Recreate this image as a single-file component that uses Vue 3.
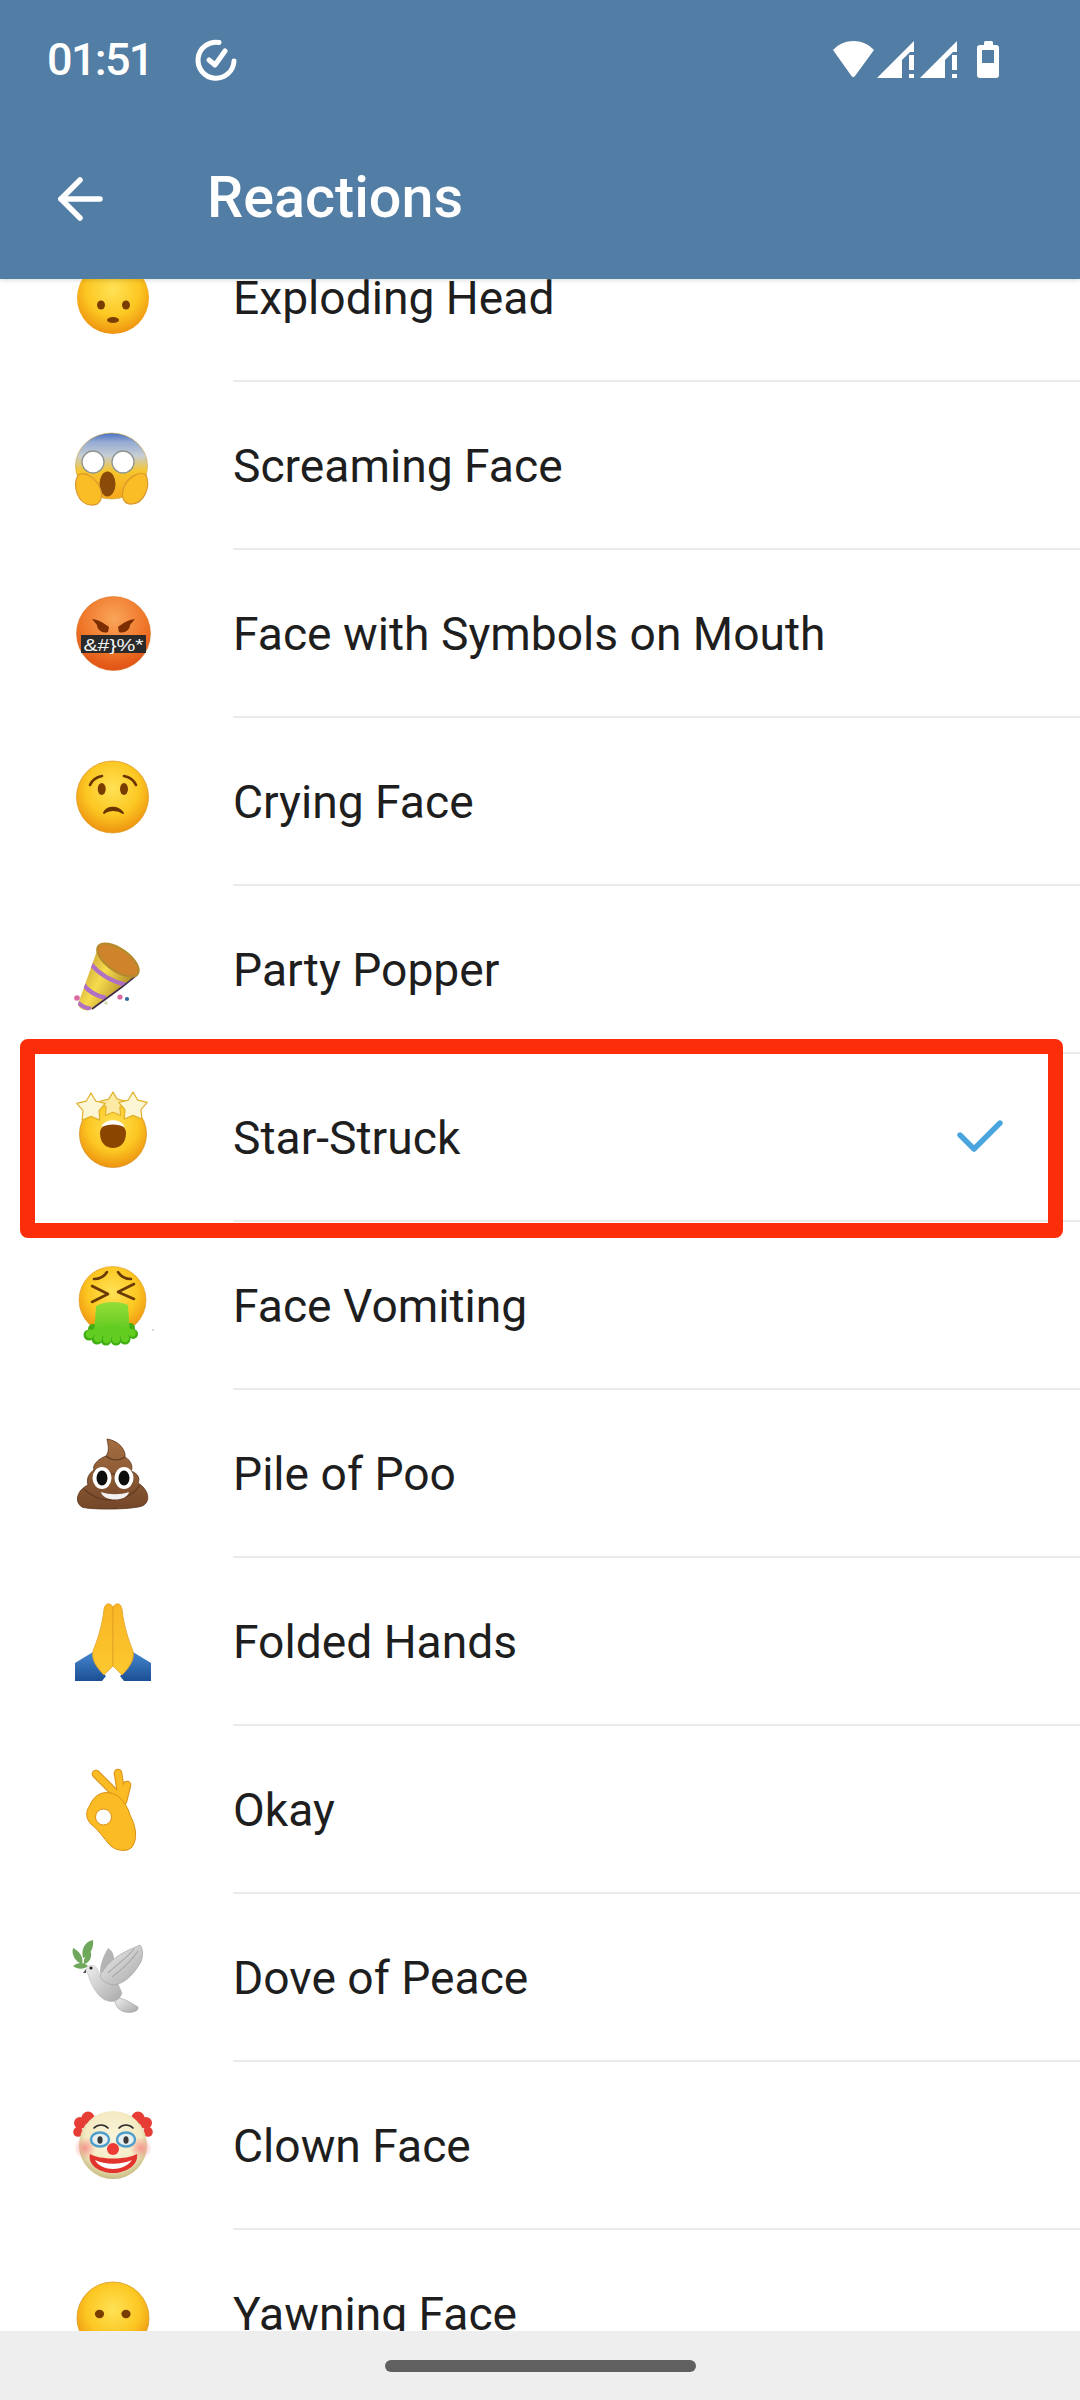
<script setup>
const rows = [
  { id: 'exploding', name: 'Exploding Head' },
  { id: 'scream', name: 'Screaming Face' },
  { id: 'symbols', name: 'Face with Symbols on Mouth' },
  { id: 'crying', name: 'Crying Face' },
  { id: 'party', name: 'Party Popper' },
  { id: 'star', name: 'Star-Struck', selected: true },
  { id: 'vomit', name: 'Face Vomiting' },
  { id: 'poo', name: 'Pile of Poo' },
  { id: 'folded', name: 'Folded Hands' },
  { id: 'okay', name: 'Okay' },
  { id: 'dove', name: 'Dove of Peace' },
  { id: 'clown', name: 'Clown Face' },
  { id: 'yawn', name: 'Yawning Face' },
]

function star(cx, cy, r) {
  const pts = []
  for (let i = 0; i < 10; i++) {
    const rad = i % 2 ? r * 0.56 : r
    const a = -Math.PI / 2 + (i * Math.PI) / 5
    pts.push(`${(cx + rad * Math.cos(a)).toFixed(1)},${(cy + rad * Math.sin(a)).toFixed(1)}`)
  }
  return pts.join(' ')
}
</script>

<template>
  <div class="page">
    <svg class="defs" width="0" height="0">
      <defs>
        <radialGradient id="gFace" cx="50%" cy="38%" r="62%">
          <stop offset="0" stop-color="#ffe256" />
          <stop offset="0.6" stop-color="#fcc722" />
          <stop offset="1" stop-color="#ee9310" />
        </radialGradient>
        <linearGradient id="gScream" x1="0" y1="0" x2="0" y2="1">
          <stop offset="0" stop-color="#4a70c4" />
          <stop offset="0.14" stop-color="#97acd2" />
          <stop offset="0.34" stop-color="#c5cdd6" />
          <stop offset="0.58" stop-color="#f7c52c" />
          <stop offset="1" stop-color="#f6a71b" />
        </linearGradient>
        <radialGradient id="gAngry" cx="50%" cy="30%" r="75%">
          <stop offset="0" stop-color="#f9a55a" />
          <stop offset="0.6" stop-color="#ef7528" />
          <stop offset="1" stop-color="#dd4a10" />
        </radialGradient>
        <linearGradient id="gCone" x1="0" y1="0" x2="1" y2="0.6">
          <stop offset="0" stop-color="#b4862a" />
          <stop offset="0.5" stop-color="#f6dc4e" />
          <stop offset="1" stop-color="#a57a20" />
        </linearGradient>
        <linearGradient id="gGreen" x1="0" y1="0" x2="0" y2="1">
          <stop offset="0" stop-color="#93dd38" />
          <stop offset="1" stop-color="#5cc81e" />
        </linearGradient>
        <linearGradient id="gPoo" x1="0" y1="0" x2="0" y2="1">
          <stop offset="0" stop-color="#a56e42" />
          <stop offset="1" stop-color="#744729" />
        </linearGradient>
        <linearGradient id="gHand" x1="0" y1="0" x2="0" y2="1">
          <stop offset="0" stop-color="#f9b625" />
          <stop offset="1" stop-color="#fcc82f" />
        </linearGradient>
        <linearGradient id="gCuff" x1="0" y1="0" x2="0" y2="1">
          <stop offset="0" stop-color="#4587cf" />
          <stop offset="1" stop-color="#1c4f94" />
        </linearGradient>
        <linearGradient id="gDove" x1="0" y1="0" x2="1" y2="1">
          <stop offset="0" stop-color="#efefef" />
          <stop offset="1" stop-color="#a8a8a8" />
        </linearGradient>
        <radialGradient id="gClown" cx="50%" cy="42%" r="58%">
          <stop offset="0" stop-color="#fbf5dc" />
          <stop offset="0.72" stop-color="#f4eac2" />
          <stop offset="1" stop-color="#c6bb80" />
        </radialGradient>
        <radialGradient id="gCheek">
          <stop offset="0" stop-color="#f68a86" stop-opacity="0.85" />
          <stop offset="1" stop-color="#f68a86" stop-opacity="0" />
        </radialGradient>
        <clipPath id="coneClip">
          <path d="M38 29 L77 56 L32 90 C27 93 19 91 18 85 Z" />
        </clipPath>
      </defs>
    </svg>

    <header class="appbar">
      <div class="status">
        <span class="time">01:51</span>
        <svg class="status-check" width="44" height="44" viewBox="0 0 44 44" fill="none" stroke="#fff" stroke-width="5" stroke-linecap="round" stroke-linejoin="round">
          <path d="M25 4.5 A18 18 0 1 0 40 23" />
          <path d="M15 22 L21 27 L31 13" />
        </svg>
        <svg class="status-right" width="170" height="38" viewBox="0 0 170 38" fill="#fff">
          <path d="M1 9 C12 -3 31 -3 42 9 L23 35 C22 36.5 20.5 36.5 19.5 35 Z" />
          <g v-for="dx in [0, 43]" :key="dx" :transform="`translate(${dx} 0)`">
            <path d="M45 37 L82 0 V37 Z" />
            <path d="M70 19 L78 11 H83 V38 H70 Z" fill="#527da4" />
            <rect x="77" y="14" width="5" height="15" />
            <rect x="77" y="33" width="5" height="4" />
          </g>
          <rect x="152" y="0" width="9" height="6" rx="1.5" />
          <path fill-rule="evenodd" d="M148 4 H164 Q167 4 167 7 V34 Q167 37 164 37 H148 Q145 37 145 34 V7 Q145 4 148 4 Z M150 9 V22 H162 V9 Z" />
        </svg>
      </div>
      <div class="toolbar">
        <svg class="back" width="46" height="46" viewBox="0 0 46 46" fill="none" stroke="#fff" stroke-width="5.5" stroke-linecap="round" stroke-linejoin="round">
          <path d="M43 23 H4" />
          <path d="M23 4 L4 23 L23 42" />
        </svg>
        <span class="title">Reactions</span>
      </div>
    </header>

    <main class="viewport">
      <ul class="list">
        <li v-for="row in rows" :key="row.id" class="row">
          <svg class="emoji" width="100" height="100" viewBox="0 0 100 100">
            <template v-if="row.id === 'exploding'">
              <circle cx="53" cy="51" r="36" fill="url(#gFace)" />
              <ellipse cx="41" cy="58" rx="4" ry="4.5" fill="#7a3d00" />
              <ellipse cx="66" cy="58" rx="4" ry="4.5" fill="#7a3d00" />
              <ellipse cx="53" cy="73" rx="6" ry="3" fill="#7a3d00" />
            </template>

            <template v-else-if="row.id === 'scream'">
              <ellipse cx="51.5" cy="51" rx="36" ry="33" fill="url(#gScream)" stroke="#c9a23a" stroke-width="0.6" />
              <circle cx="33" cy="47" r="11" fill="#fff" stroke="#8d958f" stroke-width="1.3" />
              <circle cx="63" cy="47" r="11" fill="#fff" stroke="#8d958f" stroke-width="1.3" />
              <ellipse cx="47.5" cy="69" rx="8" ry="12.5" fill="#8a4a08" />
              <path d="M18 60 C12 72 18 89 31 90 C42 91 43 80 40 73 C37 65 26 55 18 60 Z" fill="#fbbd26" stroke="#d8962f" stroke-width="1.2" />
              <path d="M86 60 C91 72 84 88 72 89 C62 90 61 79 64 72 C67 64 78 55 86 60 Z" fill="#fbbd26" stroke="#d8962f" stroke-width="1.2" />
            </template>

            <template v-else-if="row.id === 'symbols'">
              <circle cx="53.5" cy="50.5" r="37" fill="url(#gAngry)" stroke="#d8792c" stroke-width="0.6" />
              <path d="M32 36 C40 37 45 41 49 44 L48 49 C43 51 37 47 37 42 Z" fill="#7d2e00" />
              <path d="M75 36 C67 37 62 41 58 44 L59 49 C64 51 70 47 70 42 Z" fill="#7d2e00" />
              <rect x="21" y="52" width="65" height="18" fill="#2a2a2a" />
              <text x="53.5" y="67.5" class="swear" text-anchor="middle" textLength="60" lengthAdjust="spacingAndGlyphs">&amp;#}%*</text>
            </template>

            <template v-else-if="row.id === 'crying'">
              <circle cx="52.5" cy="46" r="36" fill="url(#gFace)" stroke="#dd9a2a" stroke-width="0.8" />
              <ellipse cx="41.7" cy="38" rx="4" ry="6" fill="#7a3d00" />
              <ellipse cx="64" cy="38" rx="4" ry="6" fill="#7a3d00" />
              <path d="M30 34 C32 29 37 26 42 25 M64 25 C69 26 74 29 76 34" fill="none" stroke="#6a3500" stroke-width="2.6" stroke-linecap="round" />
              <path d="M44 62 C47 55 58 55 63 62 C58 58 49 58 44 62 Z" fill="#6a3500" stroke="#6a3500" stroke-width="2" stroke-linejoin="round" />
            </template>

            <template v-else-if="row.id === 'party'">
              <path d="M38 29 L77 56 L32 90 C27 93 19 91 18 85 Z" fill="url(#gCone)" />
              <g clip-path="url(#coneClip)" fill="none" stroke="#b070c4" stroke-width="4.4">
                <path d="M30 44 C38 54 50 62 66 66" />
                <path d="M23 65 C28 72 36 77 46 79" />
                <path d="M16 82 C20 86 25 89 31 90" />
              </g>
              <path d="M32 90 L62 68 L77 56" fill="none" stroke="#3d2b4d" stroke-width="1.6" />
              <ellipse cx="58" cy="41" rx="24" ry="11" transform="rotate(35 58 41)" fill="#cf842c" stroke="#b58a2c" stroke-width="2.2" />
              <circle cx="17" cy="79" r="2.8" fill="#d86aa0" />
              <circle cx="60" cy="78" r="2.6" fill="#d86aa0" />
              <circle cx="67" cy="80" r="2.1" fill="#2f6a9c" />
              <circle cx="46" cy="84" r="1.8" fill="#d8dcb0" />
            </template>

            <template v-else-if="row.id === 'star'">
              <circle cx="53" cy="47" r="33.5" fill="url(#gFace)" stroke="#d99428" stroke-width="0.8" />
              <path d="M40 46 C40 33 66 33 66 46 C66 56 60 61 53 61 C46 61 40 56 40 46 Z" fill="#8a4600" />
              <path d="M41.5 40 C44 31 62 31 64.5 40 C58 36.5 48 36.5 41.5 40 Z" fill="#fff" />
              <g fill="#fdf6d4" stroke="#e0b02c" stroke-width="1.2" stroke-linejoin="round">
                <polygon :points="star(53, 18, 13)" fill="#fbe9a4" />
                <polygon :points="star(31, 21, 15)" />
                <polygon :points="star(73, 20, 15)" />
              </g>
            </template>

            <template v-else-if="row.id === 'vomit'">
              <circle cx="52.5" cy="45" r="33.5" fill="url(#gFace)" stroke="#dd9a2a" stroke-width="0.6" />
              <g fill="none" stroke="#6a3a05" stroke-width="2.6" stroke-linecap="round" stroke-linejoin="round">
                <path d="M32 31 L48 39 L32 47" />
                <path d="M74 29 L58 37 L74 44" />
                <path d="M34 24 C40 24 44 22 47 17" />
                <path d="M58 17 C61 22 65 24 71 24" />
              </g>
              <g fill="#3fae12">
                <circle cx="29" cy="80" r="5.5" />
                <circle cx="37" cy="84" r="5.5" />
                <circle cx="46" cy="85" r="5.5" />
                <circle cx="56" cy="85" r="5.5" />
                <circle cx="65" cy="84" r="5.5" />
                <circle cx="73" cy="79" r="5" />
                <circle cx="33" cy="74" r="5" />
                <circle cx="70" cy="73" r="5" />
              </g>
              <path d="M36 51 C44 46 60 46 68 50 L70 80 L34 80 Z" fill="url(#gGreen)" />
              <g fill="#62cd20">
                <circle cx="30" cy="79" r="4.2" />
                <circle cx="38" cy="83" r="4.2" />
                <circle cx="47" cy="84" r="4.2" />
                <circle cx="56" cy="84" r="4.2" />
                <circle cx="65" cy="83" r="4.2" />
                <circle cx="72" cy="78" r="3.8" />
                <ellipse cx="52" cy="76" rx="20" ry="6" />
              </g>
              <circle cx="93" cy="75" r="1" fill="#c8c8c8" />
            </template>

            <template v-else-if="row.id === 'poo'">
              <path d="M47 16 C60 18 66 28 65 34 C72 38 73 45 71 48 C79 51 80 56 78 60 C88 66 91 77 84 82 C78 87 28 87 22 84 C14 79 17 67 28 62 C26 56 29 50 34 47 C32 42 38 36 46 33 C50 28 48 22 47 16 Z" fill="url(#gPoo)" stroke="#5b3419" stroke-width="0.8" />
              <path d="M46 33 C52 38 60 38 65 34 M34 47 C42 52 60 52 71 48 M24 66 C42 84 70 78 80 62" fill="none" stroke="#633b1f" stroke-width="1.4" />
              <ellipse cx="42" cy="55" rx="9.5" ry="11" fill="#fff" />
              <ellipse cx="64" cy="55" rx="9.5" ry="11" fill="#fff" />
              <ellipse cx="42" cy="55" rx="5.5" ry="7.5" fill="#0d0d0d" />
              <ellipse cx="64" cy="55" rx="5.5" ry="7.5" fill="#0d0d0d" />
              <path d="M41 69 C50 72 60 72 69 69 C67 79 43 79 41 69 Z" fill="#f2f2f2" />
            </template>

            <template v-else-if="row.id === 'folded'">
              <path d="M15 72 L33 61 C34 72 40 80 46 85 L42 90 L15 90 Z" fill="url(#gCuff)" />
              <path d="M91 72 L73 61 C72 72 66 80 60 85 L64 90 L91 90 Z" fill="url(#gCuff)" />
              <path d="M53 16 C50 11 45 12 44 18 C42 36 37 50 33 60 C31 68 36 76 44 84 L53 75 Z" fill="url(#gHand)" stroke="#de9c23" stroke-width="0.7" />
              <path d="M53 16 C56 11 61 12 62 18 C64 36 69 50 73 60 C75 68 70 76 62 84 L53 75 Z" fill="url(#gHand)" stroke="#de9c23" stroke-width="0.7" />
            </template>

            <template v-else-if="row.id === 'okay'">
              <g fill="none" stroke-linecap="round">
                <g stroke="#d98f14" stroke-width="8.6">
                  <path d="M36 15 L62 41" />
                  <path d="M58 14 L62 40" />
                  <path d="M67 26 L63 42" />
                </g>
                <g stroke="#fbbb24" stroke-width="6.6">
                  <path d="M67 26 L63 42" />
                  <path d="M58 14 L62 40" />
                  <path d="M36 15 L62 41" />
                </g>
              </g>
              <path d="M58 37 C46 30 35 34 30 46 C25 53 26 60 31 65 C37 70 41 75 48 84 C54 92 67 94 72 88 C78 80 76 67 70 56 C68 48 64 43 58 37 Z" fill="#fbbb24" stroke="#d98f14" stroke-width="1" />
              <circle cx="43.5" cy="58" r="8" fill="#fff" stroke="#d98f14" stroke-width="1" />
            </template>

            <template v-else-if="row.id === 'dove'">
              <g fill="#6fa85c">
                <path d="M33 13 C24 15 21 23 23 31 C30 29 34 21 33 13 Z" />
                <path d="M13 21 C11 28 16 35 22 37 C24 30 19 24 13 21 Z" />
                <path d="M31 25 C26 27 23 32 24 37 C29 36 32 31 31 25 Z" />
                <path d="M13 39 C18 43 25 42 28 39 C24 35 18 35 13 39 Z" />
              </g>
              <path d="M40 46 C40 36 44 28 48 21 C55 25 56 34 50 42 Z" fill="#b4b4b4" />
              <path d="M55 72 C60 69 70 75 78 80 C79 85 69 87 62 84 C58 82 54 77 55 72 Z" fill="url(#gDove)" stroke="#9c9c9c" stroke-width="0.6" />
              <path d="M26 44 C26 37 36 36 38 44 C42 50 50 52 56 52 L62 66 C60 73 54 76 48 74 C38 72 30 56 28 47 Z" fill="url(#gDove)" stroke="#b4b4b4" stroke-width="0.5" />
              <path d="M40 49 C50 30 66 24 80 18 C84 22 83 34 79 38 C72 50 62 58 52 58 C46 56 42 54 40 49 Z" fill="url(#gDove)" stroke="#9c9c9c" stroke-width="0.6" />
              <path d="M52 50 C60 44 70 36 78 24 M48 46 C56 38 66 32 74 22" fill="none" stroke="#a6a6a6" stroke-width="1.1" />
              <circle cx="31" cy="41" r="1.6" fill="#222" />
              <path d="M26 42 L23 46 L26 46 Z" fill="#555" />
            </template>

            <template v-else-if="row.id === 'clown'">
              <g fill="#e63e36">
                <circle cx="28" cy="23" r="6.5" />
                <circle cx="20" cy="28" r="6" />
                <circle cx="18" cy="37" r="4.8" />
                <circle cx="78" cy="23" r="6.5" />
                <circle cx="86" cy="28" r="6" />
                <circle cx="88" cy="37" r="4.8" />
              </g>
              <circle cx="53" cy="50" r="34" fill="url(#gClown)" />
              <circle cx="25" cy="53" r="11" fill="url(#gCheek)" />
              <circle cx="81" cy="53" r="11" fill="url(#gCheek)" />
              <path d="M34 33 C38 29 44 29 48 33 M59 33 C63 29 69 29 73 33" fill="none" stroke="#2c2c2c" stroke-width="1.7" stroke-linecap="round" />
              <ellipse cx="40" cy="44.5" rx="9" ry="7" fill="#e7efef" stroke="#4f9dc9" stroke-width="2.4" />
              <ellipse cx="66" cy="44.5" rx="9" ry="7" fill="#e7efef" stroke="#4f9dc9" stroke-width="2.4" />
              <ellipse cx="40" cy="45" rx="2.6" ry="3.8" fill="#3a3a3a" />
              <ellipse cx="66" cy="45" rx="2.6" ry="3.8" fill="#3a3a3a" />
              <path d="M30 59 C40 65 66 65 77 59 C79 70 66 78 53 78 C40 78 27 70 30 59 Z" fill="#e2342d" />
              <path d="M35 65 C46 70 60 70 72 65 C68 71 60 74 53 74 C46 74 38 71 35 65 Z" fill="#fff" />
              <circle cx="53" cy="54" r="6" fill="#ee3b36" />
            </template>

            <template v-else-if="row.id === 'yawn'">
              <circle cx="53" cy="55" r="36" fill="url(#gFace)" stroke="#d99a1e" stroke-width="0.8" />
              <ellipse cx="39.5" cy="51" rx="4.6" ry="4.2" fill="#7a3d00" />
              <ellipse cx="66" cy="51" rx="4.6" ry="4.2" fill="#7a3d00" />
            </template>
          </svg>

          <div class="row-body">
            <span class="label">{{ row.name }}</span>
            <svg v-if="row.selected" class="tick" width="46" height="36" viewBox="0 0 46 36" fill="none" stroke="#4aa5df" stroke-width="5.4" stroke-linecap="round" stroke-linejoin="round">
              <path d="M3 17 L17 31 L43 5" />
            </svg>
          </div>

          <div v-if="row.selected" class="highlight"></div>
        </li>
      </ul>
    </main>

    <footer class="navbar">
      <div class="pill"></div>
    </footer>
  </div>
</template>

<style scoped>
.page {
  width: 1080px;
  height: 2400px;
  display: flex;
  flex-direction: column;
  overflow: hidden;
  background: #fff;
  font-family: Roboto, "Liberation Sans", sans-serif;
}
.defs {
  position: absolute;
}
.appbar {
  flex: none;
  height: 279px;
  background: #527da4;
  position: relative;
  z-index: 2;
  box-shadow: 0 1px 5px rgba(0, 0, 0, 0.16);
  color: #fff;
}
.status {
  height: 120px;
  display: flex;
  align-items: flex-start;
  padding-left: 47px;
}
.time {
  width: 147px;
  margin-top: 35px;
  font-size: 45px;
  line-height: 50px;
  font-weight: 500;
  letter-spacing: -1.7px;
}
.status-check {
  margin-top: 38px;
}
.status-right {
  margin-top: 41px;
  margin-left: auto;
  margin-right: 78px;
}
.toolbar {
  height: 159px;
  display: flex;
  align-items: center;
  padding-left: 57px;
}
.back {
  flex: none;
  margin-top: -2px;
}
.title {
  margin-left: 104px;
  margin-top: -3px;
  font-size: 57.5px;
  font-weight: 500;
  line-height: 66px;
}
.viewport {
  flex: 1;
  min-height: 0;
  overflow: hidden;
  position: relative;
}
.list {
  list-style: none;
  margin: -65px 0 0;
  padding: 0;
}
.row {
  height: 168px;
  display: flex;
  align-items: center;
  position: relative;
}
.emoji {
  flex: none;
  margin-left: 60px;
  margin-right: 73px;
  margin-bottom: 2px;
}
.swear {
  font-family: "Liberation Sans", sans-serif;
  font-size: 17px;
  font-weight: 400;
  fill: #f4f4f4;
}
.row-body {
  flex: 1;
  height: 100%;
  box-sizing: border-box;
  border-bottom: 2px solid #ebebeb;
  display: flex;
  align-items: center;
  justify-content: space-between;
  padding-right: 77px;
  padding-top: 2px;
}
.label {
  font-size: 46.2px;
  line-height: 54px;
  font-weight: 400;
  color: #1e1e1e;
}
.tick {
  flex: none;
  margin-top: -4px;
}
.highlight {
  position: absolute;
  left: 20px;
  top: -15px;
  width: 1043px;
  height: 199px;
  box-sizing: border-box;
  border: 15px solid #fb2e09;
  border-radius: 8px;
  z-index: 1;
  pointer-events: none;
}
.navbar {
  flex: none;
  height: 69px;
  background: #eeeeee;
  position: relative;
  z-index: 2;
  display: flex;
  justify-content: center;
  padding-top: 29px;
  box-sizing: border-box;
}
.pill {
  width: 311px;
  height: 12px;
  border-radius: 6px;
  background: #606060;
}
</style>
